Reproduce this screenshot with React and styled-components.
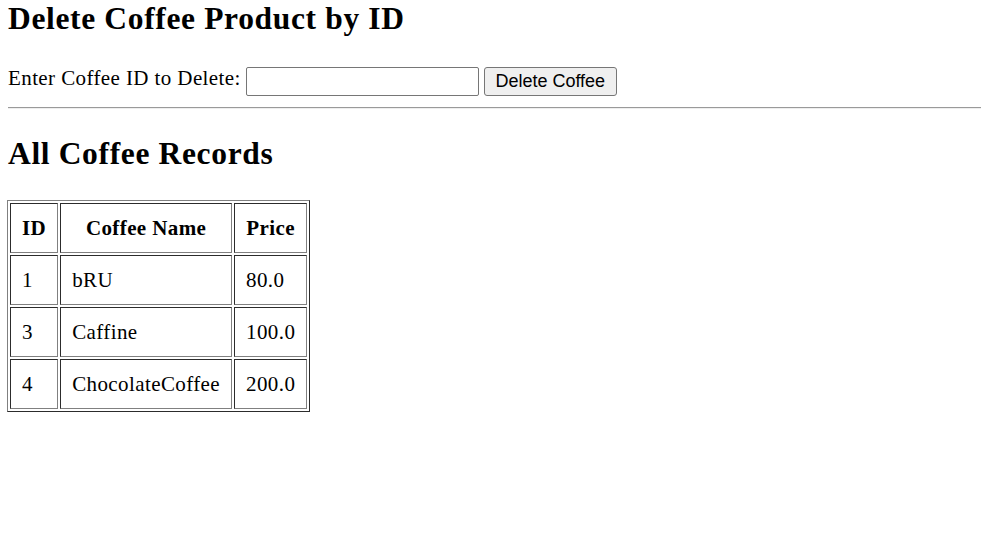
import React, { useState } from "react";
import styled, { createGlobalStyle } from "styled-components";

const GlobalStyle = createGlobalStyle`
  body {
    margin: 0;
    background: #fff;
    color: #000;
    font-family: "Liberation Serif", "Times New Roman", serif;
    font-size: 21px;
    letter-spacing: 0.4px;
  }
`;

const Page = styled.div`
  padding: 2px 1px 0 8px;
`;

const Title = styled.h2`
  font-size: 31.5px;
  font-weight: bold;
  letter-spacing: 0.65px;
  line-height: 34.5px;
  margin: 0 0 ${(p) => p.$after || 0}px;
`;

const DeleteForm = styled.form`
  display: flex;
  align-items: flex-start;
  gap: 4px;
  margin: 0;
`;

const Label = styled.label`
  line-height: 23px;
`;

const IdInput = styled.input`
  box-sizing: border-box;
  width: 233px;
  height: 29px;
  margin: 0 0 0 1px;
  border: 1px solid #767676;
  border-radius: 2px;
  padding: 1px 3px;
  font-size: 16.7px;
  background: #fff;
`;

const Button = styled.button`
  box-sizing: border-box;
  width: 133px;
  height: 29px;
  margin-left: 1px;
  padding: 1px 0;
  border: 1px solid #767676;
  border-radius: 3px;
  background: #efefef;
  color: #000;
  font-family: "Liberation Sans", Arial, sans-serif;
  font-size: 18px;
  letter-spacing: 0;
  cursor: pointer;
`;

const Rule = styled.hr`
  margin: 11px 0 28px;
  border: none;
  border-top: 1px solid #9a9a9a;
  border-bottom: 1px solid #eeeeee;
  height: 0;
`;

const Table = styled.table`
  margin-left: -1px;
  border: 1px outset gray;
  border-spacing: 2.5px;
`;

const Th = styled.th`
  border: 1px inset gray;
  padding: 12.5px 11px;
  line-height: 23px;
  font-weight: bold;
  text-align: center;
`;

const Td = styled.td`
  border: 1px inset gray;
  padding: 12.5px 11px;
  line-height: 23px;
  text-align: left;
`;

const coffees = [
  { id: 1, name: "bRU", price: "80.0" },
  { id: 3, name: "Caffine", price: "100.0" },
  { id: 4, name: "ChocolateCoffee", price: "200.0" },
];

export default function App() {
  const [coffeeId, setCoffeeId] = useState("");

  return (
    <Page>
      <GlobalStyle />
      <Title $after={30.5}>Delete Coffee Product by ID</Title>
      <DeleteForm onSubmit={(e) => e.preventDefault()}>
        <Label htmlFor="coffeeId">Enter Coffee ID to Delete:</Label>
        <IdInput
          id="coffeeId"
          value={coffeeId}
          onChange={(e) => setCoffeeId(e.target.value)}
        />
        <Button type="submit">Delete Coffee</Button>
      </DeleteForm>
      <Rule />
      <Title $after={28.5}>All Coffee Records</Title>
      <Table>
        <thead>
          <tr>
            <Th>ID</Th>
            <Th>Coffee Name</Th>
            <Th>Price</Th>
          </tr>
        </thead>
        <tbody>
          {coffees.map((c) => (
            <tr key={c.id}>
              <Td>{c.id}</Td>
              <Td>{c.name}</Td>
              <Td>{c.price}</Td>
            </tr>
          ))}
        </tbody>
      </Table>
    </Page>
  );
}
